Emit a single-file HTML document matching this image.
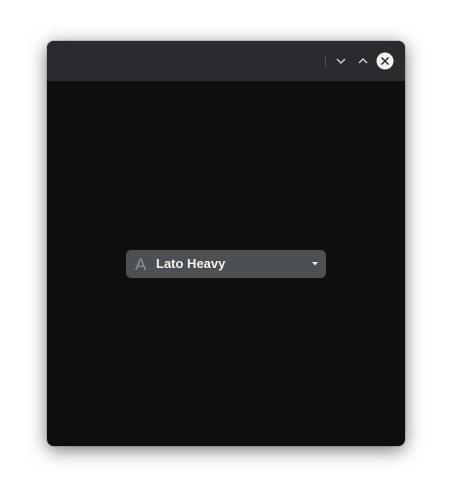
<!DOCTYPE html>
<html><head><style>
html,body{margin:0;padding:0;background:#fff;width:452px;height:499px;overflow:hidden;font-family:"Liberation Sans",sans-serif}
.win{position:absolute;left:47px;top:41px;width:358px;height:405px;background:#0d0e10;border-radius:7px;box-shadow:0 4px 18px rgba(0,0,0,.55),0 0 1px rgba(0,0,0,.8);overflow:hidden}
.hdr{position:absolute;left:0;top:0;width:100%;height:40px;background:#2a2b2f;border-bottom:1px solid #121315}
.combo{position:absolute;left:79px;top:209px;width:200px;height:28px;background:#4d5053;border-radius:5px}
.combo .a{position:absolute;left:9px;top:5px;font-size:17px;color:#8e9194}
.combo .t{position:absolute;left:30px;top:6px;font-size:13px;font-weight:bold;color:#f2f2f2}
</style></head><body>
<div class="win">
 <div class="hdr">
  <div style="position:absolute;left:278px;top:16px;width:1px;height:9px;background:#555"></div>
  <svg style="position:absolute;left:288px;top:14px" width="12" height="12" viewBox="0 0 12 12"><path d="M2 4 L6 8 L10 4" stroke="#d0d0d0" stroke-width="1.4" fill="none"/></svg>
  <svg style="position:absolute;left:310px;top:14px" width="12" height="12" viewBox="0 0 12 12"><path d="M2 8 L6 4 L10 8" stroke="#d0d0d0" stroke-width="1.4" fill="none"/></svg>
  <svg style="position:absolute;left:329px;top:11px" width="18" height="18" viewBox="0 0 18 18"><circle cx="9" cy="9" r="8.5" fill="#f2f2f2"/><path d="M5.5 5.5 L12.5 12.5 M12.5 5.5 L5.5 12.5" stroke="#2a2b2f" stroke-width="1.5"/></svg>
 </div>
 <div class="combo"><span class="a">A</span><span class="t">Lato Heavy</span>
  <svg style="position:absolute;left:186px;top:12px" width="6" height="4" viewBox="0 0 6 4"><path d="M0 0 L6 0 L3 3.5Z" fill="#eee"/></svg>
 </div>
</div>
</body></html>
